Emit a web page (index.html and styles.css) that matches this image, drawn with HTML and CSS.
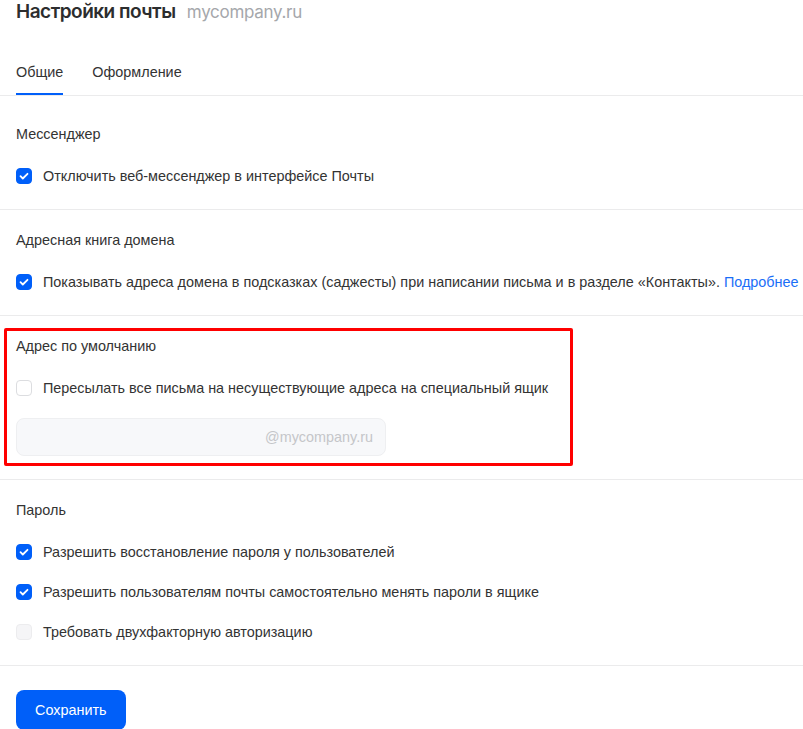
FILE: index.html
```html
<!DOCTYPE html>
<html lang="ru">
<head>
    <meta charset="UTF-8">
    <meta name="viewport" content="width=device-width, initial-scale=1.0">
    <title>Настройки почты</title>
    <link rel="stylesheet" href="styles.css">
</head>
<body>
    <div class="page">
        <h1 class="title">Настройки почты <span class="domain">mycompany.ru</span></h1>

        <div class="tabs">
            <span class="tab active">Общие</span>
            <span class="tab">Оформление</span>
        </div>

        <div class="sections">
            <div class="section">
                <div class="section-label">Мессенджер</div>
                <div class="options">
                    <label class="option">
                        <span class="check checked"></span>
                        Отключить веб-мессенджер в интерфейсе Почты
                    </label>
                </div>
            </div>

            <div class="section">
                <div class="section-label">Адресная книга домена</div>
                <div class="options">
                    <label class="option nowrap">
                        <span class="check checked"></span>
                        Показывать адреса домена в подсказках (саджесты) при написании письма и в разделе «Контакты». <a href="#" class="link">Подробнее</a>
                    </label>
                </div>
            </div>

            <div class="section highlighted">
                <div class="section-label">Адрес по умолчанию</div>
                <div class="options">
                    <label class="option">
                        <span class="check"></span>
                        Пересылать все письма на несуществующие адреса на специальный ящик
                    </label>
                    <input class="mailbox-input" type="text" placeholder="@mycompany.ru" disabled>
                </div>
                <!-- red annotation frame -->
                <div class="mark"></div>
            </div>

            <div class="section">
                <div class="section-label">Пароль</div>
                <div class="options">
                    <label class="option">
                        <span class="check checked"></span>
                        Разрешить восстановление пароля у пользователей
                    </label>
                    <label class="option">
                        <span class="check checked"></span>
                        Разрешить пользователям почты самостоятельно менять пароли в ящике
                    </label>
                    <label class="option">
                        <span class="check disabled"></span>
                        Требовать двухфакторную авторизацию
                    </label>
                </div>
            </div>
        </div>

        <div class="actions">
            <button class="save-btn">Сохранить</button>
        </div>
    </div>
</body>
</html>
```

FILE: styles.css
```css
body {
    margin: 0;
    font-family: "Liberation Sans", Arial, sans-serif;
    font-size: 14.4px;
    color: #333;
    background: #fff;
    overflow: hidden;
}
.page {
    width: 100%;
}
.title {
    margin: 0;
    padding: 1px 16px 0;
    font-family: Inter, "Noto Sans", sans-serif;
    font-size: 19px;
    line-height: 22px;
    font-weight: 600;
    color: #2c2d2e;
    letter-spacing: -0.5px;
}
.domain {
    margin-left: 7px;
    font-size: 17px;
    font-weight: 400;
    letter-spacing: -0.3px;
    color: #a5a7ab;
}
.tabs {
    display: flex;
    gap: 29px;
    margin-top: 39px;
    padding: 0 16px;
    border-bottom: 1px solid #ebebec;
}
.tab {
    line-height: 20px;
    padding-bottom: 11px;
    border-bottom: 2px solid transparent;
    color: #333;
}
.tab.active {
    border-bottom-color: #005ff9;
}
.sections {
    margin-top: 8px;
}
.section {
    padding: 20px 16px 23px;
    border-bottom: 1px solid #ebebec;
}
.section.highlighted {
    position: relative;
}
.section-label {
    line-height: 20px;
    margin-bottom: 22px;
    color: #333;
}
.options {
    display: flex;
    flex-direction: column;
    gap: 20px;
}
.option {
    display: flex;
    align-items: center;
    line-height: 20px;
    color: #333;
}
.option.nowrap {
    white-space: nowrap;
}
.check {
    flex: none;
    width: 14px;
    height: 14px;
    margin-right: 11px;
    border: 1px solid #dcdde0;
    border-radius: 4px;
    background: #fff;
}
.check.checked {
    border-color: #005ff9;
    background: #005ff9 url("data:image/svg+xml,%3Csvg xmlns='http://www.w3.org/2000/svg' viewBox='0 0 16 16'%3E%3Cpath d='M4.5 8.2l2.3 2.3 4.7-4.7' fill='none' stroke='%23fff' stroke-width='1.8' stroke-linecap='round' stroke-linejoin='round'/%3E%3C/svg%3E") center / 16px 16px no-repeat;
}
.check.disabled {
    border-color: #ececee;
    background: #f5f5f7;
}
.link {
    color: #1a6ef7;
    text-decoration: none;
    margin-left: 4px;
}
.mailbox-input {
    width: 370px;
    height: 38px;
    box-sizing: border-box;
    padding: 0 12px;
    border: 1px solid #eeeff1;
    border-radius: 8px;
    background: #f7f8fa;
    font-family: inherit;
    font-size: 14.4px;
    text-align: right;
}
.mailbox-input::placeholder {
    color: #c5c6c9;
}

/* Red frame drawn over the "default address" block */
.mark {
    position: absolute;
    left: 4px;
    top: 12px;
    width: 563px;
    height: 132px;
    border: 3px solid #ff0000;
    border-radius: 2px;
    pointer-events: none;
}
.actions {
    padding: 24px 16px;
}
.save-btn {
    height: 40px;
    padding: 0 19px;
    border: none;
    border-radius: 8px;
    background: #005ff9;
    color: #fff;
    font-family: inherit;
    font-size: 14.4px;
    cursor: pointer;
}
```
